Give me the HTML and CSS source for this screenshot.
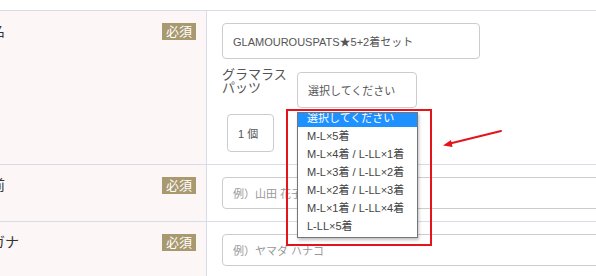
FILE: index.html
```html
<!DOCTYPE html>
<html lang="ja">
<head>
    <meta charset="UTF-8">
    <title>ご注文フォーム</title>
    <link rel="stylesheet" href="styles.css">
</head>
<body>
    <div class="page">
        <!-- 商品名 -->
        <div class="form-row">
            <div class="label-cell">
                <span class="label-text">商品名</span>
                <span class="badge">必須</span>
            </div>
            <div class="field-cell">
                <div class="text-box product-name">GLAMOUROUSPATS★5+2着セット</div>
                <div class="option-row">
                    <div class="option-label">グラマラス<br>パッツ</div>
                    <div class="select-box">
                        選択してください
                        <ul class="select-popup">
                            <li class="selected">選択してください</li>
                            <li>M-L×5着</li>
                            <li>M-L×4着 / L-LL×1着</li>
                            <li>M-L×3着 / L-LL×2着</li>
                            <li>M-L×2着 / L-LL×3着</li>
                            <li>M-L×1着 / L-LL×4着</li>
                            <li>L-LL×5着</li>
                        </ul>
                    </div>
                </div>
                <div class="qty-box">1 個</div>
            </div>
        </div>

        <!-- お名前 -->
        <div class="form-row">
            <div class="label-cell">
                <span class="label-text">お名前</span>
                <span class="badge">必須</span>
            </div>
            <div class="field-cell">
                <div class="text-box wide placeholder">例）山田 花子</div>
            </div>
        </div>

        <!-- フリガナ -->
        <div class="form-row">
            <div class="label-cell">
                <span class="label-text">フリガナ</span>
                <span class="badge">必須</span>
            </div>
            <div class="field-cell">
                <div class="text-box wide placeholder">例）ヤマダ ハナコ</div>
            </div>
        </div>
    </div>

    <!-- 注釈 -->
    <div class="mark-box"></div>
    <svg class="mark-arrow" width="70" height="30" viewBox="0 0 70 30">
        <line x1="61" y1="6" x2="8" y2="19" stroke="#e3141c" stroke-width="2" stroke-linecap="round"/>
        <polygon points="3,20.5 11,15 12.5,22" fill="#e3141c"/>
    </svg>
</body>
</html>
```

FILE: styles.css
```css
body {
    margin: 0;
    font-family: 'Liberation Sans', 'Noto Sans CJK JP', sans-serif;
    background: #fff;
    overflow: hidden;
    position: relative;
    width: 596px;
    height: 276px;
}

.page {
    margin-left: -37px;
    padding-top: 10px;
    width: 700px;
}

.form-row {
    display: flex;
    border-top: 1px solid #d8dce9;
}

.label-cell {
    box-sizing: border-box;
    width: 244px;
    flex-shrink: 0;
    background: #fdf6f7;
    border-right: 1px solid #d8dce9;
    display: flex;
    justify-content: space-between;
    align-items: flex-start;
    padding: 12px 10px 0 0;
}

.label-text {
    font-size: 14px;
    line-height: 17px;
    color: #333;
}

.badge {
    background: #a8996f;
    color: #fff;
    font-size: 13px;
    line-height: 17px;
    padding: 0 4px;
}

.field-cell {
    flex: 1;
    padding: 12px 0 12px 15px;
}

.text-box {
    box-sizing: border-box;
    border: 1px solid #ccc;
    border-radius: 4px;
    padding-left: 10px;
    font-size: 11px;
    color: #555;
    display: flex;
    align-items: center;
}

.product-name {
    width: 258px;
    height: 36px;
}

.wide {
    width: 420px;
    height: 32px;
}

.placeholder {
    color: #999;
}

.option-row {
    display: flex;
    align-items: flex-start;
    margin-top: 9px;
}

.option-label {
    font-size: 13px;
    line-height: 13px;
    color: #555;
    width: 66px;
}

.select-box {
    position: relative;
    box-sizing: border-box;
    width: 120px;
    height: 36px;
    margin: 4px 0 0 9px;
    border: 1px solid #ccc;
    border-radius: 4px;
    padding-left: 10px;
    font-size: 11px;
    color: #555;
    display: flex;
    align-items: center;
}

.select-popup {
    position: absolute;
    left: -1px;
    top: 39px;
    width: 121px;
    height: 126px;
    box-sizing: border-box;
    margin: 0;
    padding: 0;
    list-style: none;
    background: #fff;
    border: 1px solid #767676;
    box-shadow: 1px 2px 3px rgba(0,0,0,0.25);
    overflow: hidden;
    z-index: 2;
}

.select-popup li {
    height: 18px;
    line-height: 18px;
    padding-left: 9px;
    font-size: 11px;
    color: #444;
    white-space: nowrap;
}

.select-popup li:first-child {
    margin-top: -4px;
}

.select-popup li.selected {
    background: #1e90ff;
    color: #fff;
}

.qty-box {
    box-sizing: border-box;
    width: 47px;
    height: 38px;
    margin: 6px 0 0 5px;
    border: 1px solid #ccc;
    border-radius: 4px;
    padding-left: 10px;
    font-size: 11px;
    color: #555;
    display: flex;
    align-items: center;
}

.mark-box {
    position: absolute;
    left: 286px;
    top: 109px;
    width: 146px;
    height: 137px;
    box-sizing: border-box;
    border: 2px solid #e3141c;
    z-index: 3;
}

.mark-arrow {
    position: absolute;
    left: 440px;
    top: 125px;
}
```
